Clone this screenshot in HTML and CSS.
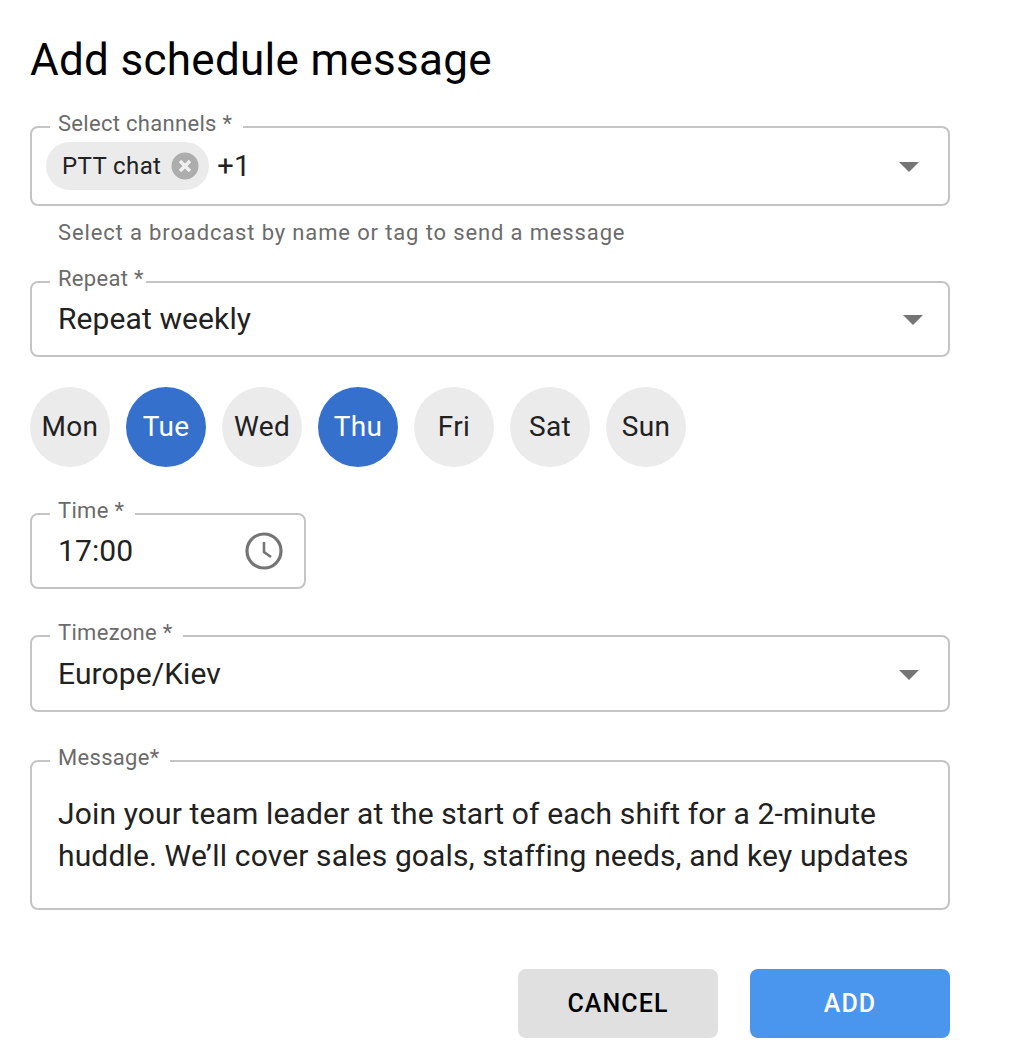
FILE: index.html
```html
<!DOCTYPE html>
<html lang="en">
<head>
    <meta charset="UTF-8">
    <title>Add schedule message</title>
    <link rel="stylesheet" href="styles.css">
</head>
<body>
    <h1 class="title">Add schedule message</h1>

    <fieldset class="field field-channels">
        <legend>Select channels *</legend>
        <div class="chip">
            <span>PTT chat</span>
            <svg class="chip-close" width="28" height="28" viewBox="0 0 28 28">
                <circle cx="14" cy="14" r="13.5" fill="#adadad"/>
                <path d="M9 9l10 10M19 9L9 19" stroke="#f0f0f0" stroke-width="3.4"/>
            </svg>
        </div>
        <span class="value">+1</span>
        <span class="arrow"></span>
    </fieldset>
    <p class="helper">Select a broadcast by name or tag to send a message</p>

    <fieldset class="field field-repeat">
        <legend class="legend-tight">Repeat *</legend>
        <span class="value">Repeat weekly</span>
        <span class="arrow"></span>
    </fieldset>

    <div class="days">
        <div class="day">Mon</div>
        <div class="day active">Tue</div>
        <div class="day">Wed</div>
        <div class="day active">Thu</div>
        <div class="day">Fri</div>
        <div class="day">Sat</div>
        <div class="day">Sun</div>
    </div>

    <fieldset class="field field-time">
        <legend>Time *</legend>
        <span class="value">17:00</span>
        <svg class="clock" width="38" height="38" viewBox="0 0 38 38" fill="none" stroke="#757575">
            <circle cx="19" cy="19" r="17" stroke-width="3.2"/>
            <path d="M19 10v10l7 5" stroke-width="2.6"/>
        </svg>
    </fieldset>

    <fieldset class="field field-zone">
        <legend>Timezone *</legend>
        <span class="value">Europe/Kiev</span>
        <span class="arrow"></span>
    </fieldset>

    <fieldset class="field field-message">
        <legend>Message*</legend>
        <p class="message">Join your team leader at the start of each shift for a 2-minute huddle. We’ll cover sales goals, staffing needs, and key updates</p>
    </fieldset>

    <div class="actions">
        <button class="btn btn-cancel">CANCEL</button>
        <button class="btn btn-add">ADD</button>
    </div>
</body>
</html>
```

FILE: styles.css
```css
/* Basic styles */
body {
    font-family: Roboto, Arial, sans-serif;
    margin: 0;
    padding: 0 76px 0 30px;
    background-color: #fff;
    color: #212121;
}
.title {
    font-size: 44px;
    font-weight: 400;
    line-height: 48px;
    letter-spacing: 0.3px;
    margin: 36px 0 32px;
    color: #000;
}

/* Outlined fields */
.field {
    display: flex;
    align-items: center;
    box-sizing: border-box;
    min-width: 0;
    height: 86px;
    margin: 0;
    padding: 0 27px 12px 26px;
    border: 2px solid #c4c4c4;
    border-radius: 8px;
}
.field legend {
    padding: 0 11px 6px 8px;
    margin-left: -8px;
    font-size: 22px;
    line-height: 16px;
    letter-spacing: 0.3px;
    color: #6b6b6b;
}
.field .legend-tight {
    padding-right: 2px;
}
.value {
    font-size: 30px;
    letter-spacing: 0.1px;
}
.arrow {
    margin: 4px 2px 0 auto;
    width: 0;
    height: 0;
    border-left: 10px solid transparent;
    border-right: 10px solid transparent;
    border-top: 10px solid #757575;
}
.clock {
    margin-top: 2px;
}
.field-channels {
    height: 90px;
    padding-left: 14px;
    padding-bottom: 10px;
}
.field-channels legend {
    margin-left: 4px;
}
.field-channels .arrow {
    margin-top: 2px;
}
.chip {
    display: flex;
    align-items: center;
    gap: 10px;
    height: 48px;
    padding: 0 10px 0 16px;
    border-radius: 24px;
    background-color: #ebebeb;
    font-size: 24px;
    letter-spacing: 0.4px;
}
.field-channels .value {
    margin-left: 8px;
    font-size: 29px;
}
.helper {
    margin: 14px 0 0 28px;
    font-size: 22px;
    line-height: 25px;
    letter-spacing: 0.86px;
    color: #6b6b6b;
}
.field-repeat {
    margin-top: 26px;
    padding-right: 23px;
}

/* Day picker */
.days {
    display: flex;
    gap: 16px;
    margin-top: 30px;
}
.day {
    display: flex;
    align-items: center;
    justify-content: center;
    box-sizing: border-box;
    width: 80px;
    height: 80px;
    padding-bottom: 2px;
    border-radius: 50%;
    background-color: #ebebeb;
    font-size: 28px;
    letter-spacing: 0.3px;
}
.day.active {
    background-color: #3570cc;
    color: #fff;
}

.field-time {
    width: 276px;
    margin-top: 36px;
    padding-right: 21px;
    justify-content: space-between;
}
.field-zone {
    height: 87px;
    margin-top: 36px;
    padding-bottom: 11px;
}
.field-message {
    height: 160px;
    margin-top: 38px;
    padding: 0 20px 0 26px;
    align-items: flex-start;
}
.message {
    margin: 21px 0 0;
    font-size: 30px;
    line-height: 42px;
    letter-spacing: 0.14px;
}

/* Buttons */
.actions {
    display: flex;
    justify-content: flex-end;
    gap: 32px;
    margin-top: 59px;
}
.btn {
    width: 200px;
    height: 69px;
    border: none;
    border-radius: 8px;
    font-family: Roboto, Arial, sans-serif;
    font-size: 25px;
    font-weight: 500;
    letter-spacing: 1.1px;
}
.btn-cancel {
    background-color: #e0e0e0;
    color: #000;
}
.btn-add {
    background-color: #4a95ee;
    color: #fff;
}
```
